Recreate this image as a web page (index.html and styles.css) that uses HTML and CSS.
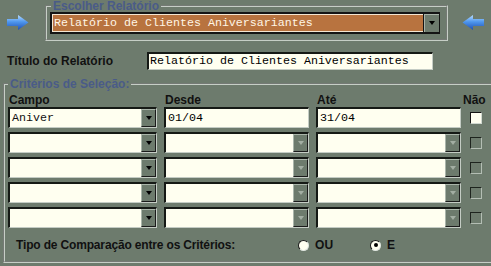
FILE: index.html
```html
<!DOCTYPE html>
<html lang="pt">
<head>
    <meta charset="UTF-8">
    <title>Relatórios</title>
    <link rel="stylesheet" href="styles.css">
</head>
<body>
    <div class="report-row">
        <svg class="arrow" width="22" height="15" viewBox="0 0 22 15">
            <defs>
                <linearGradient id="blueA" x1="0" y1="0" x2="0" y2="1">
                    <stop offset="0" stop-color="#b8dcff"/>
                    <stop offset="0.45" stop-color="#4f97ee"/>
                    <stop offset="1" stop-color="#1f4fb2"/>
                </linearGradient>
            </defs>
            <polygon points="0,4 11,4 11,0 21.5,7.5 11,15 11,11 0,11" fill="url(#blueA)"/>
        </svg>
        <fieldset class="group report-group">
            <legend>Escolher Relatório</legend>
            <div class="report-combo">
                <span class="report-text">Relatório de Clientes Aniversariantes</span>
                <span class="report-btn"><i class="tri"></i></span>
            </div>
        </fieldset>
        <svg class="arrow arrow-back" width="22" height="15" viewBox="0 0 22 15">
            <defs>
                <linearGradient id="blueB" x1="0" y1="0" x2="0" y2="1">
                    <stop offset="0" stop-color="#b8dcff"/>
                    <stop offset="0.45" stop-color="#4f97ee"/>
                    <stop offset="1" stop-color="#1f4fb2"/>
                </linearGradient>
            </defs>
            <polygon points="22,4 11,4 11,0 0.5,7.5 11,15 11,11 22,11" fill="url(#blueB)"/>
        </svg>
    </div>

    <div class="title-row">
        <span class="label">Título do Relatório</span>
        <div class="field title-field">Relatório de Clientes Aniversariantes</div>
    </div>

    <fieldset class="group criteria">
        <legend>Critérios de Seleção:</legend>
        <div class="crit-head">
            <span>Campo</span>
            <span>Desde</span>
            <span>Até</span>
            <span class="head-nao">Não</span>
        </div>
        <div class="crit-grid">
            <div class="combo"><span class="combo-text">Aniver</span><span class="drop-btn"><i class="tri"></i></span></div>
            <div class="field">01/04</div>
            <div class="field">31/04</div>
            <div class="check-cell"><span class="check"></span></div>

            <div class="combo"><span class="combo-text"></span><span class="drop-btn"><i class="tri"></i></span></div>
            <div class="combo"><span class="combo-text"></span><span class="drop-btn off"><i class="tri"></i></span></div>
            <div class="combo"><span class="combo-text"></span><span class="drop-btn off"><i class="tri"></i></span></div>
            <div class="check-cell"><span class="check off"></span></div>

            <div class="combo"><span class="combo-text"></span><span class="drop-btn"><i class="tri"></i></span></div>
            <div class="combo"><span class="combo-text"></span><span class="drop-btn off"><i class="tri"></i></span></div>
            <div class="combo"><span class="combo-text"></span><span class="drop-btn off"><i class="tri"></i></span></div>
            <div class="check-cell"><span class="check off"></span></div>

            <div class="combo"><span class="combo-text"></span><span class="drop-btn"><i class="tri"></i></span></div>
            <div class="combo"><span class="combo-text"></span><span class="drop-btn off"><i class="tri"></i></span></div>
            <div class="combo"><span class="combo-text"></span><span class="drop-btn off"><i class="tri"></i></span></div>
            <div class="check-cell"><span class="check off"></span></div>

            <div class="combo"><span class="combo-text"></span><span class="drop-btn"><i class="tri"></i></span></div>
            <div class="combo"><span class="combo-text"></span><span class="drop-btn off"><i class="tri"></i></span></div>
            <div class="combo"><span class="combo-text"></span><span class="drop-btn off"><i class="tri"></i></span></div>
            <div class="check-cell"><span class="check off"></span></div>
        </div>
        <div class="compare">
            <span class="label compare-label">Tipo de Comparação entre os Critérios:</span>
            <span class="radio radio-ou"></span><span class="label">OU</span>
            <span class="radio radio-e checked"></span><span class="label">E</span>
        </div>
    </fieldset>
</body>
</html>
```

FILE: styles.css
```css
body {
    margin: 0;
    width: 491px;
    height: 266px;
    overflow: hidden;
    background-color: #6d7b6d;
    font-family: "Liberation Sans", Arial, sans-serif;
    font-size: 12px;
    color: #111;
}

.label {
    font-weight: bold;
}

/* group boxes */
.group {
    margin: 0;
    border: 2px groove #c6cec6;
    box-sizing: border-box;
}

.group legend {
    font-weight: bold;
    font-size: 12px;
    line-height: 12px;
    color: #4a5b88;
    padding: 0 2px;
}

/* top: report chooser */
.report-row {
    display: flex;
    align-items: flex-start;
    padding-left: 7px;
}

.arrow {
    margin-top: 15px;
    flex-shrink: 0;
}

.report-group {
    width: 403px;
    margin-left: 16px;
    padding: 0 6px 5px 3px;
}

.report-group legend {
    margin-left: 1px;
}

.arrow-back {
    margin-left: 14px;
}

.report-combo {
    display: flex;
    height: 22px;
    box-sizing: border-box;
    border: 2px solid #141414;
    border-right-width: 1px;
    background-color: #b8733f;
    box-shadow: inset 0 0 0 1px #f3e6d2;
}

.report-text {
    flex: 1;
    padding-left: 2px;
    line-height: 18px;
    color: #fff6e6;
    font-family: "Liberation Mono", "Courier New", monospace;
    font-size: 11.67px;
}

.report-btn {
    width: 15px;
    display: flex;
    align-items: center;
    justify-content: center;
    background-color: #6d7b6d;
    border-left: 1px solid #141414;
    box-shadow: inset 1px 1px 0 #a9b4a9;
}

.tri {
    width: 0;
    height: 0;
    border-left: 3.5px solid transparent;
    border-right: 3.5px solid transparent;
    border-top: 4px solid #000;
}

/* title */
.title-row {
    display: flex;
    align-items: center;
    margin-top: 11px;
    padding-left: 7px;
}

.title-row .label {
    width: 140px;
}

.field {
    height: 21px;
    box-sizing: border-box;
    border-style: solid;
    border-width: 2px 1px 1px 2px;
    border-color: #151915 #c4ccc4 #c4ccc4 #151915;
    background-color: #fffff0;
    padding-left: 2px;
    line-height: 18px;
    font-family: "Liberation Mono", "Courier New", monospace;
    font-size: 11.67px;
    color: #000;
}

.title-field {
    width: 286px;
    height: 18px;
    line-height: 15px;
    padding-left: 1px;
}

/* criteria */
.criteria {
    width: 496px;
    margin: 8px 0 0 3px;
    padding: 0 0 6px 3px;
}

.crit-head {
    display: grid;
    grid-template-columns: 149px 145px 145px 1fr;
    column-gap: 7px;
    height: 17px;
    padding-top: 4px;
    box-sizing: border-box;
    font-weight: bold;
    line-height: 13px;
}

.crit-head span {
    padding-left: 1px;
}

.crit-head .head-nao {
    padding-left: 0;
    margin-left: -5px;
}

.crit-grid {
    display: grid;
    grid-template-columns: 149px 145px 145px 1fr;
    grid-auto-rows: 21px;
    column-gap: 7px;
    row-gap: 4px;
}

.combo {
    display: flex;
    height: 21px;
    box-sizing: border-box;
    border-style: solid;
    border-width: 2px 1px 1px 2px;
    border-color: #151915 #c4ccc4 #c4ccc4 #151915;
    background-color: #fffff0;
}

.combo-text {
    flex: 1;
    padding-left: 2px;
    line-height: 18px;
    font-family: "Liberation Mono", "Courier New", monospace;
    font-size: 11.67px;
}

.drop-btn {
    width: 15px;
    display: flex;
    align-items: center;
    justify-content: center;
    box-sizing: border-box;
    background-color: #6d7b6d;
    border: 1px solid;
    border-color: #aab5aa #1a1a1a #1a1a1a #aab5aa;
}

.drop-btn.off .tri {
    border-top-color: #a3aea3;
}

.check-cell {
    display: flex;
    align-items: center;
    padding-left: 2px;
}

.check {
    width: 12px;
    height: 12px;
    box-sizing: border-box;
    border: 1px solid;
    border-color: #141414 #d0d8d0 #d0d8d0 #141414;
    background-color: #fffff0;
}

.check.off {
    background-color: #6d7b6d;
    border-color: #1e241e #b4beb4 #b4beb4 #1e241e;
}

.compare {
    display: flex;
    align-items: center;
    height: 20px;
    margin-top: 7px;
    padding-left: 8px;
}

.compare-label {
    letter-spacing: -0.16px;
}

.radio {
    width: 11px;
    height: 11px;
    box-sizing: border-box;
    border-radius: 50%;
    border: 1px solid;
    border-color: #1a1a1a #e0e6e0 #e0e6e0 #1a1a1a;
    background-color: #fffff0;
    margin-right: 6px;
    display: flex;
    align-items: center;
    justify-content: center;
}

.radio-ou {
    margin-left: 63px;
}

.radio-e {
    margin-left: 37px;
}

.radio.checked::after {
    content: "";
    width: 4px;
    height: 4px;
    border-radius: 50%;
    background-color: #000;
}
```
